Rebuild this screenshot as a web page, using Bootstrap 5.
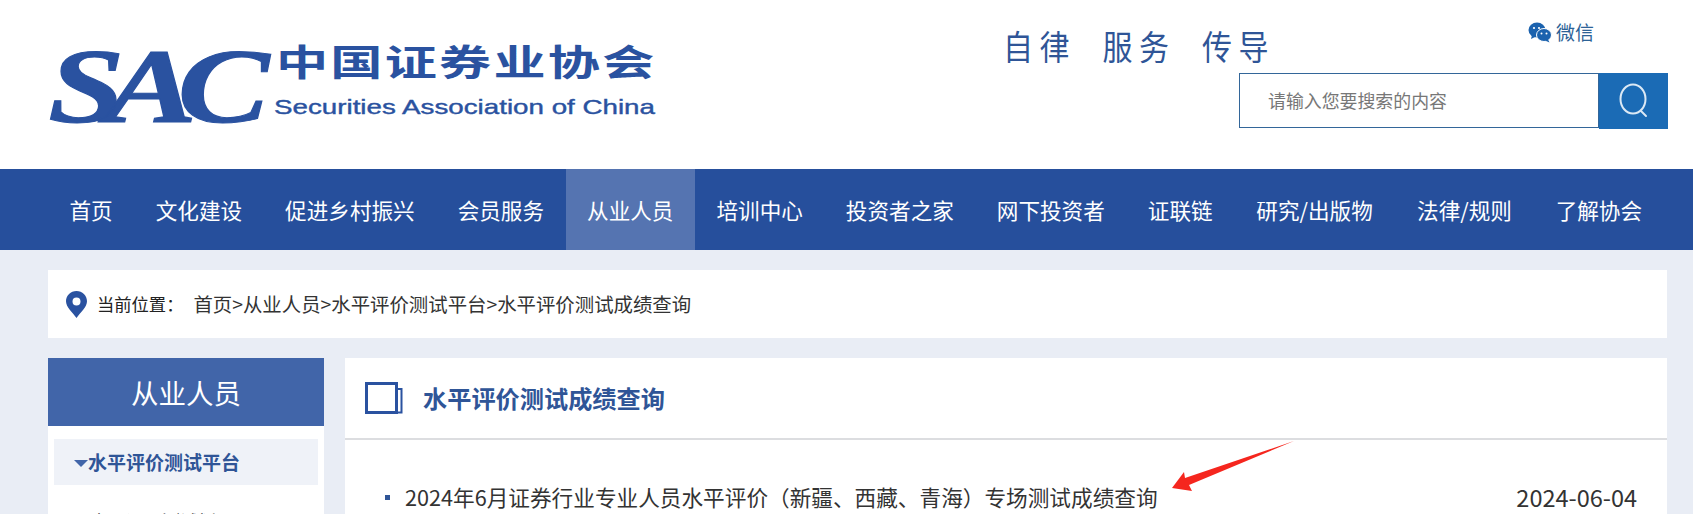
<!DOCTYPE html>
<html lang="zh-CN">
<head>
    <meta charset="UTF-8">
    <meta name="viewport" content="width=device-width, initial-scale=1">
    <title>水平评价测试成绩查询</title>
    <link href="https://cdn.jsdelivr.net/npm/bootstrap@5.3.2/dist/css/bootstrap.min.css" rel="stylesheet">
    <style>
        html, body { height: 514px; overflow: hidden; }
        body { background: #e9edf5; font-family: "Noto Sans CJK SC", "Liberation Sans", sans-serif; color: #333; }
        .site-head { height: 169px; background: #fff; padding: 0 25px 0 48px; }
        .logo-svg { display: block; margin-top: 40px; flex: none; }
        .head-right { width: 665px; padding-top: 21px; }
        .head-top { height: 52px; }
        .slogan { font-size: 30px; line-height: 44px; color: #2f5597; letter-spacing: 6.5px; font-weight: 400; white-space: pre; transform: scaleY(1.12); transform-origin: left top; }
        .wx-link { margin-left: auto; margin-right: 74px; height: 26px; margin-top: -2px; font-size: 19px; line-height: 26px; color: #2c6296; gap: 4px; }
        .search-box { width: 429px; height: 56px; margin-left: auto; }
        .search-input { width: 360px; height: 55px; border: 1px solid #336699; padding-left: 28px; font-size: 17.9px; line-height: 52px; color: #777; }
        .search-btn { width: 69px; height: 56px; background: #1b6bb5; }
        .main-nav { height: 81px; background: #264f9c; padding-left: 48px; }
        .nav-cell { padding: 0 21.5px; line-height: 81px; font-size: 21.6px; color: #fff; white-space: nowrap; }
        .nav-cell.on { background: #5574b1; }
        .nav-cell.wide-cell { padding: 0 22.2px; }
        .page-wrap { padding: 20px 26px 0 48px; }
        .crumb-bar { height: 68px; background: #fff; padding-left: 18px; font-size: 19.4px; color: #333; }
        .crumb-label { margin: 0 10px 0 10px; font-size: 17.3px; color: #222; }
        .cols { margin-top: 20px; gap: 21px; }
        .side-col { width: 276px; flex: none; background: #fff; height: 156px; }
        .side-title { height: 68px; line-height: 68px; background: #4165a9; color: #fff; text-align: center; font-size: 27.5px; }
        .side-on { margin: 13px 6px 0; height: 46px; line-height: 46px; background: #eff2f8; color: #2f5597; font-size: 19px; font-weight: 700; padding-left: 20px; }
        .side-arrow { display: inline-block; width: 0; height: 0; border: 7px solid transparent; border-top: 7px solid #4165a9; border-bottom: 0; vertical-align: 3px; }
        .side-sub { padding-left: 42px; margin-top: 23px; font-size: 18px; line-height: 26px; color: #333; white-space: nowrap; }
        .main-col { flex: 1; background: #fff; height: 156px; position: relative; }
        .main-head { height: 82px; border-bottom: 2px solid #dcdde0; padding-left: 20px; }
        .main-title { margin-left: 20px; font-size: 24.2px; font-weight: 700; color: #2f5597; }
        .news-row { padding: 41px 30px 0 40px; font-size: 21.65px; line-height: 32px; color: #333; }
        .news-dot { width: 5px; height: 5px; background: #2f5597; margin-right: 15px; }
        .news-date { font-size: 23.5px; }
        .red-arrow { position: absolute; left: 823px; top: 80px; }
    </style>
</head>
<body>
    <header class="site-head d-flex justify-content-between">
        <svg class="logo-svg" width="620" height="90" viewBox="0 0 620 90">
            <g transform="translate(0 82) scale(1.3 1)">
                <text font-family="Liberation Serif" font-style="italic" font-weight="700" font-size="106" fill="#2a52a0" stroke="#2a52a0" stroke-width="1" letter-spacing="-15">SAC</text>
            </g>
            <g transform="translate(228 36) scale(1.45 1)">
                <text font-family="Noto Sans CJK SC" font-weight="700" font-size="36" fill="#2a52a0" letter-spacing="1.500">中国证券业协会</text>
            </g>
            <text x="226" y="74" font-family="Liberation Sans" font-size="21" fill="#2a52a0" stroke="#2a52a0" stroke-width=".4" textLength="381" lengthAdjust="spacingAndGlyphs">Securities Association of China</text>
        </svg>
        <div class="head-right">
            <div class="head-top d-flex">
                <div class="slogan">自律  服务  传导</div>
                <div class="wx-link d-flex align-items-center">
                    <svg width="24" height="22" viewBox="0 0 24 22">
                        <ellipse cx="9" cy="9" rx="8.500" ry="7.500" fill="#1b62ae"/>
                        <path d="M4 14l-1 4 5-2.500z" fill="#1b62ae"/>
                        <ellipse cx="16" cy="14" rx="7.500" ry="6.500" fill="#1b62ae" stroke="#fff"/>
                        <path d="M20 18.500l1.500 3-4.500-2z" fill="#1b62ae"/>
                        <circle cx="6" cy="7" r="1.100" fill="#fff"/><circle cx="11" cy="7" r="1.100" fill="#fff"/>
                        <circle cx="13.500" cy="12.500" r="1" fill="#fff"/><circle cx="18.500" cy="12.500" r="1" fill="#fff"/>
                    </svg>
                    <span>微信</span>
                </div>
            </div>
            <div class="search-box d-flex">
                <div class="search-input">请输入您要搜索的内容</div>
                <div class="search-btn d-flex align-items-center justify-content-center">
                    <svg width="34" height="38" viewBox="0 0 34 38" fill="none" stroke="#dce9f5" stroke-width="2">
                        <ellipse cx="16" cy="17" rx="12.500" ry="14.500"/>
                        <path d="M24 29l5 5" stroke-linecap="round"/>
                    </svg>
                </div>
            </div>
        </div>
    </header>
    <nav class="main-nav d-flex">
        <div class="nav-cell">首页</div>
        <div class="nav-cell">文化建设</div>
        <div class="nav-cell">促进乡村振兴</div>
        <div class="nav-cell">会员服务</div>
        <div class="nav-cell on">从业人员</div>
        <div class="nav-cell">培训中心</div>
        <div class="nav-cell">投资者之家</div>
        <div class="nav-cell">网下投资者</div>
        <div class="nav-cell">证联链</div>
        <div class="nav-cell wide-cell">研究/出版物</div>
        <div class="nav-cell wide-cell">法律/规则</div>
        <div class="nav-cell">了解协会</div>
    </nav>
    <div class="page-wrap">
        <div class="crumb-bar d-flex align-items-center">
            <svg width="21" height="27" viewBox="0 0 21 27"><path fill-rule="evenodd" d="M10.500 0C4.700 0 0 4.600 0 10.300 0 16 6 21 10.500 27 15 21 21 16 21 10.300 21 4.600 16.300 0 10.500 0zm0 6.500a4 4 0 1 1 0 8 4 4 0 0 1 0-8z" fill="#2a52a0"/></svg>
            <span class="crumb-label">当前位置：</span>
            <span>首页&gt;从业人员&gt;水平评价测试平台&gt;水平评价测试成绩查询</span>
        </div>
        <div class="cols d-flex">
            <aside class="side-col overflow-hidden">
                <div class="side-title">从业人员</div>
                <div class="side-on"><span class="side-arrow"></span>水平评价测试平台</div>
                <div class="side-sub">水平评价测试划</div>
            </aside>
            <section class="main-col">
                <div class="main-head d-flex align-items-center">
                    <svg width="38" height="32" viewBox="0 0 38 32" fill="none" stroke="#2a52a0"><path d="M1.500 1.500h30v29h-30z" stroke-width="3"/><path d="M32 7h4.500v23.500H32" stroke-width="2"/></svg>
                    <div class="main-title">水平评价测试成绩查询</div>
                </div>
                <div class="news-row d-flex align-items-center">
                    <span class="news-dot"></span>
                    <span class="flex-grow-1">2024年6月证券行业专业人员水平评价（新疆、西藏、青海）专场测试成绩查询</span>
                    <span class="news-date">2024-06-04</span>
                </div>
                <svg class="red-arrow" width="128" height="60" viewBox="0 0 128 60"><path d="M126 3 17 40 16 34 4 50 24 53 21 47z" fill="#f5261e"/></svg>
            </section>
        </div>
    </div>
</body>
</html>
